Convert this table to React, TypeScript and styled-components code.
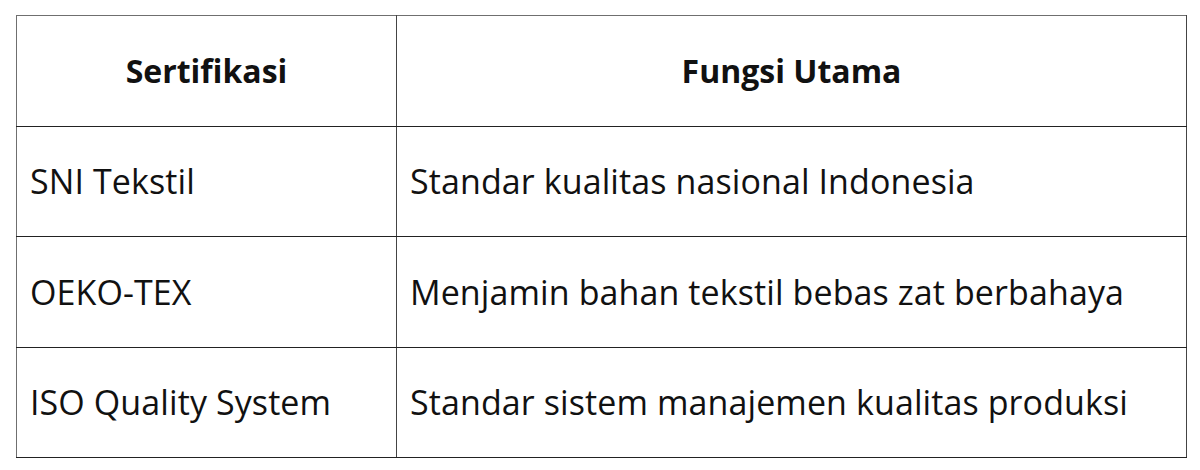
import React from 'react';
import styled, { createGlobalStyle } from 'styled-components';

const GlobalStyle = createGlobalStyle`
  html, body {
    margin: 0;
    padding: 0;
    background: #ffffff;
  }
  body {
    font-family: "Open Sans", "Noto Sans", sans-serif;
    color: #111111;
  }
`;

const Page = styled.div`
  width: 1200px;
  height: 470px;
  padding: 15px 0 0 16px;
  box-sizing: border-box;
`;

const Table = styled.table`
  width: 1171px;
  border-collapse: collapse;
  table-layout: fixed;
  border: 1.5px solid #6f6f6f;
`;

const HeadCell = styled.th<{ $width?: number }>`
  box-sizing: border-box;
  width: ${({ $width }) => ($width ? `${$width}px` : 'auto')};
  height: 110.5px;
  padding: 0 13px;
  font-size: 32px;
  font-weight: 700;
  text-align: center;
  vertical-align: middle;
  border-right: 1px solid #444444;
  border-bottom: 1px solid #222222;
  color: #111111;
`;

const Cell = styled.td`
  box-sizing: border-box;
  height: 110.5px;
  padding: 0 13px;
  font-size: 34px;
  font-weight: 400;
  letter-spacing: 0.1px;
  text-align: left;
  vertical-align: middle;
  white-space: nowrap;
  border-right: 1px solid #444444;
  border-bottom: 1px solid #222222;
  color: #111111;
`;

const rows = [
  { cert: 'SNI Tekstil', fn: 'Standar kualitas nasional Indonesia' },
  { cert: 'OEKO-TEX', fn: 'Menjamin bahan tekstil bebas zat berbahaya' },
  { cert: 'ISO Quality System', fn: 'Standar sistem manajemen kualitas produksi' },
];

export default function App() {
  return (
    <>
      <GlobalStyle />
      <Page>
        <Table>
          <thead>
            <tr>
              <HeadCell $width={380}>Sertifikasi</HeadCell>
              <HeadCell>Fungsi Utama</HeadCell>
            </tr>
          </thead>
          <tbody>
            {rows.map((r) => (
              <tr key={r.cert}>
                <Cell>{r.cert}</Cell>
                <Cell>{r.fn}</Cell>
              </tr>
            ))}
          </tbody>
        </Table>
      </Page>
    </>
  );
}
